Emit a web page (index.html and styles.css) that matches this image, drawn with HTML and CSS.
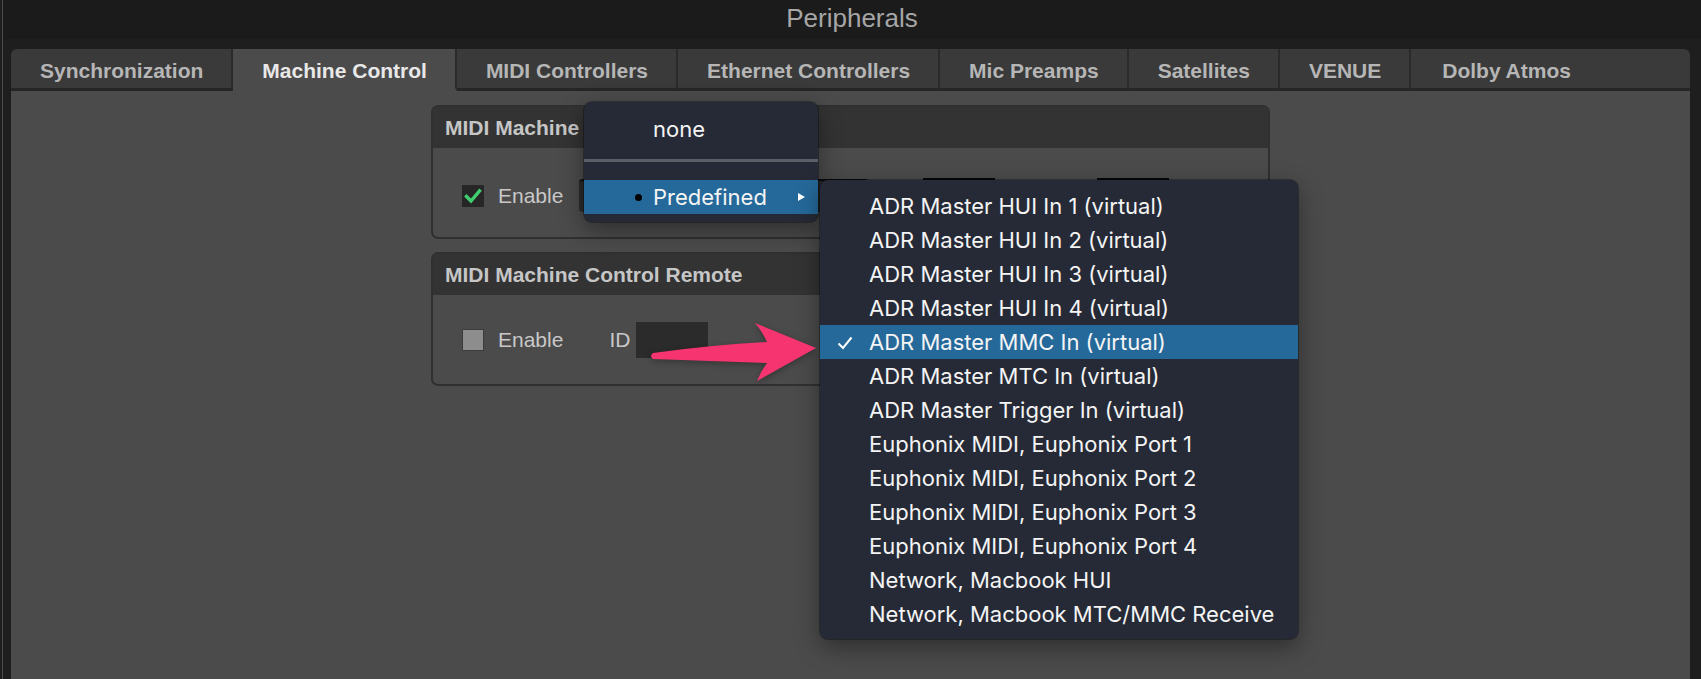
FILE: index.html
```html
<!DOCTYPE html>
<html lang="en">
<head>
    <meta charset="UTF-8">
    <title>Peripherals</title>
    <link rel="stylesheet" href="styles.css">
</head>
<body>

<div class="window">
    <div class="titlebar">Peripherals</div>

    <div class="tabs">
        <div class="tab">Synchronization</div>
        <div class="tab active">Machine Control</div>
        <div class="tab">MIDI Controllers</div>
        <div class="tab">Ethernet Controllers</div>
        <div class="tab">Mic Preamps</div>
        <div class="tab">Satellites</div>
        <div class="tab">VENUE</div>
        <div class="tab">Dolby Atmos</div>
    </div>

    <div class="content">
        <section class="panel">
            <div class="panel-head">MIDI Machine Control</div>
            <div class="panel-body lower">
                <span class="box checked">
                    <svg width="22" height="22" viewBox="0 0 22 22"><path d="M4.5 11.5 L9 16 L17.5 6" fill="none" stroke="#3fcf6f" stroke-width="3.4" stroke-linecap="square"/></svg>
                </span>
                <span class="label">Enable</span>
                <div class="select"></div>
                <div class="field field-a"></div>
                <div class="field field-b"></div>
            </div>
        </section>

        <section class="panel">
            <div class="panel-head">MIDI Machine Control Remote</div>
            <div class="panel-body">
                <span class="box"></span>
                <span class="label">Enable</span>
                <span class="label id-label">ID</span>
                <div class="id-field"></div>
            </div>
        </section>

        <!-- popup: port menu -->
        <div class="menu menu-main">
            <div class="menu-item none-item">none</div>
            <div class="menu-sep"></div>
            <div class="menu-item on">
                <span class="bullet"></span>Predefined<span class="sub-arrow"></span>
            </div>
        </div>

        <div class="menu submenu">
            <div class="sub-item">ADR Master HUI In 1 (virtual)</div>
            <div class="sub-item">ADR Master HUI In 2 (virtual)</div>
            <div class="sub-item">ADR Master HUI In 3 (virtual)</div>
            <div class="sub-item">ADR Master HUI In 4 (virtual)</div>
            <div class="sub-item on">
                <svg class="tick" width="16" height="14" viewBox="0 0 16 14"><path d="M1.5 7.5 L6 12 L14.5 1.5" fill="none" stroke="#ffffff" stroke-width="2"/></svg>
                ADR Master MMC In (virtual)
            </div>
            <div class="sub-item">ADR Master MTC In (virtual)</div>
            <div class="sub-item">ADR Master Trigger In (virtual)</div>
            <div class="sub-item">Euphonix MIDI, Euphonix Port 1</div>
            <div class="sub-item">Euphonix MIDI, Euphonix Port 2</div>
            <div class="sub-item">Euphonix MIDI, Euphonix Port 3</div>
            <div class="sub-item">Euphonix MIDI, Euphonix Port 4</div>
            <div class="sub-item">Network, Macbook HUI</div>
            <div class="sub-item">Network, Macbook MTC/MMC Receive</div>
        </div>

        <svg class="pointer" width="190" height="80" viewBox="0 0 190 80">
            <path d="M13 38 Q70 30 127 27 Q122 16 115 8 L176 33 L117 66 Q121 56 127 48 Q70 46 13 44 Q9 41 13 38 Z" fill="#f6346f"/>
        </svg>
    </div>
</div>

</body>
</html>
```

FILE: styles.css
```css
* {
    box-sizing: border-box;
}

body {
    margin: 0;
    background-color: #1e1e1e;
    font-family: 'Liberation Sans', Arial, sans-serif;
    overflow: hidden;
}

.window {
    height: 679px;
    margin-left: 2px;
    border-left: 1px solid #4d4d4d;
    display: flex;
    flex-direction: column;
}

.titlebar {
    height: 39px;
    background-color: #1b1b1b;
    color: #a6a6a6;
    font-size: 26px;
    line-height: 37px;
    text-align: center;
}

.tabs {
    display: flex;
    height: 42px;
    margin: 10px 11px 0 8px;
}

.tab {
    padding: 5px 28px 0 29px;
    background-color: #3a3a3a;
    color: #b6b6b6;
    font-size: 21px;
    font-weight: bold;
    line-height: 34px;
    white-space: nowrap;
    border-right: 2px solid #2a2a2a;
    border-bottom: 3px solid #262626;
}

.tab:first-child {
    border-top-left-radius: 6px;
}

.tab:last-child {
    flex: 1;
    padding-left: 31px;
    border-right: none;
    border-top-right-radius: 6px;
}

.tab.active {
    background-color: #4b4b4b;
    color: #e8e8e8;
    border-bottom-color: #4b4b4b;
}

.content {
    flex: 1;
    position: relative;
    margin: 0 11px 0 8px;
    padding-top: 14px;
    background-color: #4b4b4b;
}

/* panels */
.panel {
    width: 839px;
    margin: 0 auto 13px;
    border: 2px solid #303030;
    border-radius: 7px;
    overflow: hidden;
}

.panel-head {
    height: 41px;
    padding-left: 12px;
    background-color: #333333;
    color: #c6c6c6;
    font-size: 21px;
    font-weight: bold;
    line-height: 41px;
}

.panel-body {
    height: 89px;
    display: flex;
    align-items: center;
    padding-left: 29px;
}

.panel-body.lower {
    padding-top: 6px;
}

.box {
    width: 22px;
    height: 22px;
    margin-right: 14px;
    background-color: #8d8d8d;
    border: 1px solid #3c3c3c;
}

.box.checked {
    background-color: #262626;
    border-color: #262626;
}

.box svg {
    display: block;
    margin: -1px;
}

.label {
    color: #c8c8c8;
    font-size: 21px;
}

.id-label {
    margin-left: 46px;
}

.select {
    width: 290px;
    height: 33px;
    margin-left: 16px;
    background-color: #2b2b2b;
    border-top: 2px solid #0d0d0d;
    border-radius: 4px;
}

.field {
    width: 72px;
    height: 36px;
    background-color: #2b2b2b;
    border-top: 3px solid #080808;
}

.field-a {
    margin-left: 54px;
}

.field-b {
    margin-left: 102px;
}

.id-field {
    width: 72px;
    height: 36px;
    margin-left: 6px;
    background-color: #2b2b2b;
}

/* popup menus */
.menu {
    position: absolute;
    background-color: #252a36;
    border-radius: 8px;
    box-shadow: 0 8px 24px rgba(0, 0, 0, 0.4), 0 0 0 1px rgba(0, 0, 0, 0.3);
    color: #f4f4f4;
    font-family: Inter, 'Liberation Sans', sans-serif;
    font-size: 22px;
    overflow: hidden;
}

.menu-main {
    left: 573px;
    top: 11px;
    width: 234px;
    padding: 8px 0;
}

.menu-item {
    position: relative;
    height: 34px;
    padding-left: 69px;
    line-height: 34px;
}

.none-item {
    height: 38px;
    line-height: 38px;
}

.menu-sep {
    height: 3px;
    margin: 11px 0 18px;
    background-color: #5b5e67;
}

.on {
    background-color: #25699a;
}

.bullet {
    position: absolute;
    left: 51px;
    top: 14px;
    width: 7px;
    height: 7px;
    border-radius: 50%;
    background-color: #000000;
}

.sub-arrow {
    position: absolute;
    left: 214px;
    top: 13px;
    border-left: 7px solid #ffffff;
    border-top: 4px solid transparent;
    border-bottom: 4px solid transparent;
}

.submenu {
    left: 809px;
    top: 89px;
    width: 478px;
    padding: 9px 0 8px;
}

.sub-item {
    position: relative;
    height: 34px;
    padding-left: 49px;
    line-height: 34px;
    white-space: nowrap;
}

.tick {
    position: absolute;
    left: 17px;
    top: 11px;
}

/* annotation arrow */
.pointer {
    position: absolute;
    left: 629px;
    top: 224px;
    filter: drop-shadow(0 2px 3px rgba(0, 0, 0, 0.3));
}
```
